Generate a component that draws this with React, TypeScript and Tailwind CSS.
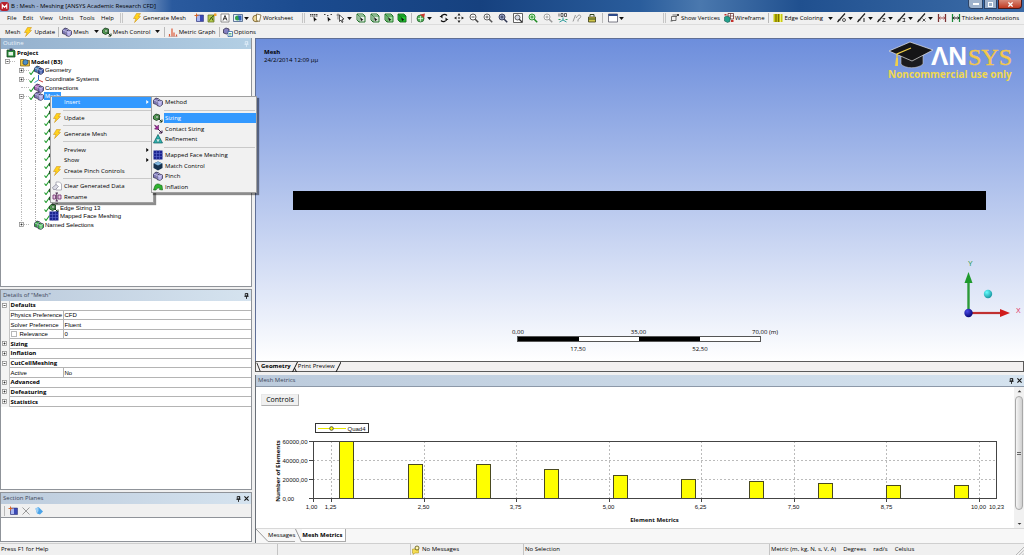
import React from "react";

type Kids = { children?: React.ReactNode };

const Ico = ({ children, cls = "size-[10px]" }: Kids & { cls?: string }) => (
  <svg viewBox="0 0 20 20" className={`${cls} shrink-0`} aria-hidden="true">
    {children}
  </svg>
);

/* ---------- icons ---------- */
const Bolt = () => (
  <Ico>
    <path d="M9 1h8l-4 6h4L5 19l3-8H3z" fill="#ffd21c" stroke="#c98a10" strokeWidth="1" />
  </Ico>
);
const CubePair = ({ a, b }: { a: string; b: string }) => (
  <Ico>
    <path d="M1 6l5-4 6 2v8l-5 3-6-2z" fill={a} stroke="#23203f" strokeWidth="1.4" />
    <path d="M1 6l6 2 5-4M7 8v7" fill="none" stroke="#e8e6ff" strokeWidth="1.2" />
    <path d="M8 9l5-3 6 2v7l-5 4-6-2z" fill={b} stroke="#23203f" strokeWidth="1.4" />
    <path d="M8 9l6 2 5-3M14 11v8" fill="none" stroke="#e8e6ff" strokeWidth="1.2" />
  </Ico>
);
const MeshCube = () => <CubePair a="#7e78b8" b="#a8a2e0" />;
const GeoCube = () => <CubePair a="#3f7fb5" b="#3558a8" />;
const ConnCube = () => <CubePair a="#b06ab8" b="#8d7cc8" />;
const GreenCube = () => <CubePair a="#39a345" b="#52c45c" />;
const SizingIco = () => (
  <Ico>
    <path d="M1 6l5-4 7 2v8l-6 3-6-3z" fill="#4f9c50" stroke="#17361c" strokeWidth="1.6" />
    <circle cx="8" cy="8" r="2.6" fill="#d9f0d4" stroke="#17361c" />
    <path d="M11 11l7 7M13 18h5v-5" fill="none" stroke="#1b3a1d" strokeWidth="2" />
  </Ico>
);
const ContactIco = () => (
  <Ico>
    <path d="M3 2l5 3 3-3v9l-8-1 3-3z" fill="#a02a9a" stroke="#4f1050" />
    <path d="M10 10l8 8M12 18h6v-5" fill="none" stroke="#3a1440" strokeWidth="2" />
  </Ico>
);
const RefineIco = () => (
  <Ico>
    <path d="M10 1l9 17H1z" fill="#2eb5b0" stroke="#0c5c60" strokeWidth="1.4" />
    <path d="M5.500 10h9L10 18z" fill="#c8f4ee" stroke="#0c5c60" />
  </Ico>
);
const MappedIco = () => (
  <Ico>
    <path d="M1 1h18v18H1z" fill="#1c2590" />
    <path d="M7 1v18M13 1v18M1 7h18M1 13h18" stroke="#5e69cc" strokeWidth="1.200" />
  </Ico>
);
const MatchIco = () => (
  <Ico>
    <path d="M1 5l9-4 9 4v9l-9 5-9-5z" fill="#16324f" />
    <path d="M2 5l8 4 8-4-8-4z" fill="#7fb4dc" />
  </Ico>
);
const InflationIco = () => (
  <Ico>
    <path d="M1 16L4 7c3-4 8-4 11-1l3 1 1 9-6-1 1-2c-3-2-6-1-8 3z" fill="#2fb32f" stroke="#145c14" strokeWidth="1.2" />
  </Ico>
);
const ClearIco = () => (
  <Ico>
    <path d="M8 2h7l4 4v12H8z" fill="#fff" stroke="#8d8d9c" strokeWidth="1.3" />
    <path d="M1 13l7-6 5 4-6 6H3z" fill="#dcdce6" stroke="#77778a" strokeWidth="1.2" />
  </Ico>
);
const RenameIco = () => (
  <Ico>
    <path d="M2 6h5v8H2zM12 6h6v8h-6z" fill="#e8c6e4" stroke="#6d2a6a" strokeWidth="1.6" />
    <path d="M7 2h5M9.500 2v16M7 18h5" stroke="#3d1440" strokeWidth="1.8" fill="none" />
  </Ico>
);
const Tick = () => (
  <svg viewBox="0 0 12 12" className="size-[6px] shrink-0" aria-hidden="true">
    <path d="M1 7l3 4L11 1" fill="none" stroke="#1c9a2a" strokeWidth="2.200" />
  </svg>
);
const ProjectIco = () => (
  <Ico>
    <path d="M2 4h14l2 2v12H2z" fill="#2b8a3c" stroke="#11401b" strokeWidth="1.5" />
    <path d="M5 8h9v7H5z" fill="#e4f4e4" />
    <path d="M7 1h6v5H7z" fill="#37415c" />
  </Ico>
);
const ModelIco = () => (
  <Ico>
    <path d="M1 5h7l2 2h9v11H1z" fill="#f0c53a" stroke="#7c5a0a" strokeWidth="1.4" />
    <path d="M6 8l4-3 6 2v6l-5 3-5-2z" fill="#4e8fc4" stroke="#1e3c64" strokeWidth="1.4" />
  </Ico>
);
const CoordIco = () => (
  <Ico>
    <path d="M9 12V2" stroke="#2b62c9" strokeWidth="2" />
    <path d="M9 12l9 4" stroke="#c93b3b" strokeWidth="2" />
    <path d="M9 12l-8 5" stroke="#2f9ac9" strokeWidth="2" />
  </Ico>
);
const Down = () => (
  <svg viewBox="0 0 8 5" className="h-[3px] w-[5px] shrink-0" aria-hidden="true">
    <path d="M0 0h8L4 5z" fill="#111" />
  </svg>
);
const PlaneNewIco = () => (
  <Ico>
    <path d="M5 4h14v13H5z" fill="#3b49b4" stroke="#20266a" />
    <path d="M6 5h6v11H6z" fill="#a9b7f0" />
    <path d="M5 1v8M1 5h8" stroke="#d6672a" strokeWidth="2" />
  </Ico>
);
const NoteIco = () => (
  <Ico>
    <path d="M2 4h12v14H2z" fill="#b6cc4c" stroke="#5c6b1a" strokeWidth="1.4" />
    <path d="M5 15l4-7 3 7M10 8l8-6" stroke="#2c4a16" strokeWidth="1.800" fill="none" />
    <path d="M14 1h5v5h-5z" fill="#f2a22c" />
  </Ico>
);
const AIco = () => (
  <Ico>
    <path d="M2 2h16v16H2z" fill="#fff" stroke="#666" strokeWidth="1.4" />
    <path d="M6 15l4-10 4 10M7.500 11.500h5" stroke="#222" strokeWidth="1.800" fill="none" />
  </Ico>
);
const ImageIco = () => (
  <Ico>
    <path d="M1 3h18v14H1z" fill="#e6eef8" stroke="#3c5a84" strokeWidth="1.6" />
    <circle cx="9" cy="10" r="5" fill="#2f9e48" />
    <path d="M10 5h7v10h-5z" fill="#2a5bb8" />
  </Ico>
);
const SheetIco = () => (
  <Ico>
    <circle cx="8" cy="11" r="6.500" fill="#f2dc9c" stroke="#6b5320" strokeWidth="1.6" />
    <path d="M9 2l9 2-3 13-6-2z" fill="#fdfdf4" stroke="#6b5320" strokeWidth="1.4" />
  </Ico>
);
const GraphIco = () => (
  <Ico>
    <path d="M3 19v-5M8 19V3M12 19v-8M17 19v-4" stroke="#dd5836" strokeWidth="2.400" />
    <path d="M1 19h18" stroke="#a88" />
  </Ico>
);
const OptionsIco = () => (
  <Ico>
    <path d="M1 5l5-3 6 2v7l-5 3-6-2z" fill="#8580c0" stroke="#23203f" strokeWidth="1.4" />
    <path d="M10 9h9v10h-9z" fill="#fff" stroke="#2a62a0" strokeWidth="1.5" />
    <path d="M12 13h5M12 16h5" stroke="#2a9a5a" strokeWidth="1.5" />
  </Ico>
);
const PickIco = ({ v }: { v: boolean }) => (
  <Ico>
    <path d={v ? "M2 3h3M15 3h3M8 5h3" : "M2 3h16M2 6h16"} stroke="#444" strokeWidth="2" strokeDasharray="3 1" />
    <path d="M9 7l7 7-4 .5L10 18z" fill="#111" />
  </Ico>
);
const CursorIco = () => (
  <Ico>
    <path d="M4 1v12M1 4h6" stroke="#555" strokeWidth="1.4" />
    <path d="M7 4l9 8-4 1 2 5-2 1-2-5-3 3z" fill="#fff" stroke="#111" strokeWidth="1.4" />
  </Ico>
);
const SelCube = ({ fill }: { fill: string }) => (
  <Ico>
    <path d="M2 2h12l4 4v12H6l-4-4z" fill={fill} stroke="#156a1e" strokeWidth="1.8" />
    <path d="M2 2l4 4h12M6 6v12" fill="none" stroke="#156a1e" strokeWidth="1.6" />
    <path d="M8 8l7 6-3 .5L10 17z" fill="#111" />
  </Ico>
);
const ViewIco = () => (
  <Ico>
    <circle cx="9" cy="11" r="7" fill="#54b45c" stroke="#1d5a26" strokeWidth="1.5" />
    <path d="M8 3l10-2-2 9z" fill="#c63a2e" />
    <path d="M4 11h10M9 6v11" stroke="#e6f7e6" strokeWidth="1.5" />
  </Ico>
);
const RotateIco = () => (
  <Ico>
    <path d="M16 5C12 1 5 3 4 8M4 15c4 4 11 2 12-3" fill="none" stroke="#111" strokeWidth="2.400" />
    <path d="M1 6h6v5zM19 14h-6V9z" fill="#111" />
  </Ico>
);
const PanIco = () => (
  <Ico>
    <path d="M10 0l3 5H7zM10 20l3-5H7zM0 10l5-3v6zM20 10l-5-3v6z" fill="#222" />
    <path d="M8.500 8.500h3v3h-3z" fill="#222" />
  </Ico>
);
const LensIco = ({ c, fill = "#fff", minus = false }: { c: string; fill?: string; minus?: boolean }) => (
  <Ico>
    <circle cx="8" cy="8" r="6" fill={fill} stroke={c} strokeWidth="1.8" />
    <path d="M12.500 12.500l6 6" stroke={c} strokeWidth="3" />
    <path d={minus ? "M5 8h6" : "M5 8h6M8 5v6"} stroke={c} strokeWidth="1.800" />
  </Ico>
);
const BoxLensIco = () => (
  <Ico>
    <path d="M1 1h18v18H1z" fill="#fff" stroke="#333" strokeWidth="1.500" />
    <circle cx="9" cy="9" r="5" fill="#d5dae6" stroke="#333" strokeWidth="1.500" />
    <path d="M12.500 12.500L18 18" stroke="#333" strokeWidth="2.400" />
  </Ico>
);
const IsoIco = () => (
  <Ico>
    <path d="M2 1v6M6 1v6h4V1H6M13 1v6h4V1z" fill="none" stroke="#333" strokeWidth="1.500" />
    <path d="M10 9v5M10 14l-7 4M10 14l7 4" stroke="#2a9a9a" strokeWidth="2" />
    <path d="M1 13l4 0M15 13h4" stroke="#2a9a5a" strokeWidth="2" />
  </Ico>
);
const LookIco = () => (
  <Ico>
    <path d="M2 17L7 4M8 10l4-5M12 5c5-3 7 2 4 5l-4 3v4" fill="none" stroke="#999" strokeWidth="2" />
  </Ico>
);
const ManageIco = () => (
  <Ico>
    <path d="M3 8h14v10H3z" fill="#d0c64a" stroke="#3a3a14" strokeWidth="1.600" />
    <path d="M6 7V3h8v4M3 12h14" fill="none" stroke="#2e4420" strokeWidth="2" />
  </Ico>
);
const WindowIco = () => (
  <Ico>
    <path d="M1 2h18v16H1z" fill="#fff" stroke="#445" strokeWidth="1.400" />
    <path d="M1 2h18v4H1z" fill="#2d4a8a" />
  </Ico>
);
const VertexIco = () => (
  <Ico>
    <path d="M3 7h9v8H3zM12 8l4-4M5 4h13M1 16h4" fill="none" stroke="#444" strokeWidth="1.500" />
    <path d="M14 2h4v4h-4z" fill="#444" />
  </Ico>
);
const WireIco = () => (
  <Ico>
    <path d="M8 1h11v11H8z" fill="#fff" stroke="#5c2020" strokeWidth="1.500" />
    <path d="M8 6h11M13 1v11" stroke="#5c2020" strokeWidth="1.200" />
    <path d="M1 8l5-2 6 3v8l-5 2-6-3z" fill="#23a08c" stroke="#0c4a40" />
    <path d="M14 14h5v4h-5zM1 2h4v3H1z" fill="#c4302c" />
  </Ico>
);
const EdgeColIco = () => (
  <Ico>
    <path d="M1 2h18v16H1z" fill="#c9c914" />
    <path d="M6 2v16M11 2v16" stroke="#7a6f00" strokeWidth="2.500" />
    <path d="M15 2v16" stroke="#f2f26a" strokeWidth="2" />
  </Ico>
);
const EdgeIco = ({ n }: { n: number }) => (
  <Ico>
    <path d="M1 18L16 1M2 14h5" stroke="#222" strokeWidth="2.400" fill="none" />
    {n === 0 && <circle cx="14" cy="14" r="3" fill="none" stroke="#222" strokeWidth="1.500" />}
    {n === 1 && <path d="M14 10v8" stroke="#222" strokeWidth="2" />}
    {n === 2 && <path d="M11 11h5l-5 6h6" stroke="#222" strokeWidth="1.500" fill="none" />}
    {n === 3 && <path d="M11 11h5l-2 3 2 3h-5" stroke="#222" strokeWidth="1.500" fill="none" />}
    {n === 4 && <path d="M11 11l6 6M17 11l-6 6" stroke="#222" strokeWidth="1.500" />}
  </Ico>
);
const AnnIco = ({ c, d }: { c: string; d: string }) => (
  <Ico>
    <path d="M3 2v16M17 2v16" stroke={c} strokeWidth="2.500" />
    <path d="M3 10h14" stroke={d} strokeWidth="2" />
    <path d="M7 7l-3 3 3 3M13 7l3 3-3 3" stroke={d} strokeWidth="1.500" fill="none" />
  </Ico>
);
const PinIco = () => (
  <svg viewBox="0 0 12 14" className="h-[6px] w-[5px]" aria-hidden="true">
    <path d="M3 1h6v6H3zM1 8h10M6 8v6M8 1v6" fill="none" stroke="currentColor" strokeWidth="2" />
  </svg>
);
const CloseIco = () => (
  <svg viewBox="0 0 12 12" className="size-[5px]" aria-hidden="true">
    <path d="M1 1l10 10M11 1L1 11" stroke="#111" strokeWidth="2.600" />
  </svg>
);

/* ---------- toolbar parts ---------- */
const Grip = () => <span className="h-[10px] w-[3px] shrink-0 border-x border-[#c6c6c6]" />;
const Sep = () => <span className="h-[10px] w-px shrink-0 bg-[#b9b9b9]" />;
const Tool = ({ name, children, drop }: Kids & { name: string; drop?: boolean }) => (
  <button type="button" aria-label={name} className="flex shrink-0 items-center gap-px">
    {children}
    {drop && <Down />}
  </button>
);
const TextTool = ({ icon, label, drop }: { icon?: React.ReactNode; label: string; drop?: boolean }) => (
  <button type="button" className="flex shrink-0 items-center gap-px whitespace-nowrap">
    {icon}
    <span>{label}</span>
    {drop && (
      <span className="pl-1">
        <Down />
      </span>
    )}
  </button>
);

const TitleBar = () => (
  <header className="flex h-3 shrink-0 items-center justify-between bg-[linear-gradient(90deg,#8fa8cc_0,#9db1d0_80px,#7f9bc4_140px,#2a5a9e_172px,#1b4b8f_300px,#16417f_480px,#2a5d9c_640px,#4a78ae_700px,#20508f_800px,#3a6aa6_1000px)]">
    <div className="flex items-center gap-[2px]">
      <svg viewBox="0 0 20 20" className="size-[9px]" aria-hidden="true">
        <rect width="20" height="20" rx="6" fill="#b8202c" />
        <path d="M5 15V6l5 6 5-6v9" fill="none" stroke="#fff" strokeWidth="2.500" />
      </svg>
      <h1 className="whitespace-nowrap text-[6px] leading-3 text-black">B : Mesh - Meshing [ANSYS Academic Research CFD]</h1>
    </div>
    <div className="flex h-[9px] gap-px self-start pr-[2px] text-white">
      <button type="button" aria-label="Minimize" className="flex w-[15px] items-center justify-center rounded-bl-sm border border-t-0 border-[#2c4468] bg-[#9fb3cd]">
        <span className="h-[2px] w-[6px] bg-white" />
      </button>
      <button type="button" aria-label="Restore" className="flex w-[13px] items-center justify-center border border-t-0 border-[#2c4468] bg-[#9fb3cd]">
        <span className="size-[5px] border border-white" />
      </button>
      <button type="button" aria-label="Close" className="flex w-[24px] items-center justify-center rounded-br-sm border border-t-0 border-[#4c1818] bg-[linear-gradient(#d88a78,#c03a22)]">
        <svg viewBox="0 0 12 12" className="size-[5px]" aria-hidden="true">
          <path d="M1 1l10 10M11 1L1 11" stroke="#fff" strokeWidth="3" />
        </svg>
      </button>
    </div>
  </header>
);

const MENUS = ["File", "Edit", "View", "Units", "Tools", "Help"];

const Toolbars = () => (
  <div className="shrink-0 bg-[#f0f0f0] text-[6px] leading-3 text-black">
    <div className="flex h-[13px] items-center border-b border-[#dcdcdc]">
      <nav className="flex w-[118px] shrink-0 justify-between pl-[7px] pr-1">
        {MENUS.map((m) => (
          <button type="button" key={m}>
            {m}
          </button>
        ))}
      </nav>
      <div className="flex w-[184px] shrink-0 items-center gap-[3px] pl-[2px]">
        <Grip />
        <span className="w-[3px]" />
        <TextTool icon={<Bolt />} label="Generate Mesh" />
        <span className="w-[2px]" />
        <Tool name="Section plane"><PlaneNewIco /></Tool>
        <Tool name="Annotation"><NoteIco /></Tool>
        <Tool name="Text"><AIco /></Tool>
        <Tool name="Figure" drop><ImageIco /></Tool>
        <TextTool icon={<SheetIco />} label="Worksheet" />
      </div>
      <div className="flex w-[134px] shrink-0 items-center justify-between pr-1">
        <Grip />
        <Tool name="Select type"><PickIco v={false} /></Tool>
        <Tool name="Select mode"><PickIco v /></Tool>
        <Tool name="Cursor" drop><CursorIco /></Tool>
        <Tool name="Vertex"><SelCube fill="#e9f3e9" /></Tool>
        <Tool name="Edge"><SelCube fill="#dcecdc" /></Tool>
        <Tool name="Face"><SelCube fill="#9fe09f" /></Tool>
        <Tool name="Body"><SelCube fill="#1fc42c" /></Tool>
        <Sep />
        <Tool name="Extend" drop><ViewIco /></Tool>
      </div>
      <div className="flex w-[188px] shrink-0 items-center justify-between pl-[3px]">
        <Tool name="Rotate"><RotateIco /></Tool>
        <Tool name="Pan"><PanIco /></Tool>
        <Tool name="Zoom"><LensIco c="#444" minus /></Tool>
        <Tool name="Zoom in"><LensIco c="#555" /></Tool>
        <Tool name="Box zoom"><LensIco c="#2c3350" fill="#98a4c6" /></Tool>
        <Tool name="Fit"><BoxLensIco /></Tool>
        <Tool name="Magnifier"><LensIco c="#1c8a22" fill="#c9f0c4" /></Tool>
        <Tool name="Previous view"><LensIco c="#999" /></Tool>
        <Tool name="Isometric view"><IsoIco /></Tool>
        <Tool name="Look at"><LookIco /></Tool>
        <Tool name="Manage views"><ManageIco /></Tool>
        <Sep />
        <Tool name="Viewports" drop><WindowIco /></Tool>
      </div>
      <div className="ml-auto flex w-[361px] shrink-0 items-center justify-between pr-[5px]">
        <Grip />
        <TextTool icon={<VertexIco />} label="Show Vertices" />
        <TextTool icon={<WireIco />} label="Wireframe" />
        <Sep />
        <TextTool icon={<EdgeColIco />} label="Edge Coloring" drop />
        {[0, 1, 2, 3, 4].map((n) => (
          <Tool key={n} name={`Edge style ${n}`} drop>
            <EdgeIco n={n} />
          </Tool>
        ))}
        <Tool name="Edge direction"><AnnIco c="#7a3030" d="#a05050" /></Tool>
        <TextTool icon={<AnnIco c="#1c8a3a" d="#222" />} label="Thicken Annotations" />
      </div>
    </div>
    <div className="flex h-[13px] items-center">
      <div className="flex w-[256px] items-center justify-between pl-[5px]">
        <span>Mesh</span>
        <TextTool icon={<Bolt />} label="Update" />
        <Sep />
        <TextTool icon={<MeshCube />} label="Mesh" drop />
        <TextTool icon={<SizingIco />} label="Mesh Control" drop />
        <Sep />
        <TextTool icon={<GraphIco />} label="Metric Graph" />
        <Sep />
        <TextTool icon={<OptionsIco />} label="Options" />
      </div>
    </div>
  </div>
);

/* ---------- left column ---------- */
const PanelHead = ({ title, active, pin, close }: { title: string; active?: boolean; pin?: boolean; close?: boolean }) => (
  <div
    className={`flex h-[11px] shrink-0 items-center justify-between px-[2px] text-[6px] leading-[11px] ${
      active ? "bg-[linear-gradient(90deg,#94b0cd,#b3cfe4)] text-[#e9f2fa]" : "bg-[linear-gradient(90deg,#bccbdc,#d5e3ef)] text-[#3c4658]"
    }`}
  >
    <h2>{title}</h2>
    <div className={`flex items-center gap-[3px] ${active ? "text-[#dcebf6]" : "text-[#111]"}`}>
      {pin && <button type="button" aria-label={`Pin ${title}`}><PinIco /></button>}
      {close && <button type="button" aria-label={`Close ${title}`}><CloseIco /></button>}
    </div>
  </div>
);

const Expander = ({ open }: { open: boolean }) => (
  <svg viewBox="0 0 10 10" className="size-[5px] shrink-0" aria-hidden="true">
    <rect x="1" y="1" width="8" height="8" fill="#fff" stroke="#8a8a8a" strokeWidth="1.500" />
    <path d={open ? "M3 5h4" : "M3 5h4M5 3v4"} stroke="#222" strokeWidth="1.500" />
  </svg>
);

type Node = { label?: string; level: number; icon: React.ReactNode; open?: boolean; bold?: boolean; tick?: boolean; sel?: boolean };
const NODES: Node[] = [
  { label: "Project", level: 0, icon: <ProjectIco />, bold: true },
  { label: "Model (B3)", level: 1, icon: <ModelIco />, bold: true, open: true },
  { label: "Geometry", level: 2, icon: <GeoCube />, open: false, tick: true },
  { label: "Coordinate Systems", level: 2, icon: <CoordIco />, open: false, tick: true },
  { label: "Connections", level: 2, icon: <ConnCube />, tick: true },
  { label: "Mesh", level: 2, icon: <MeshCube />, open: true, tick: true, sel: true },
  ...Array.from({ length: 12 }, () => ({ level: 3, icon: <SizingIco />, tick: true })),
  { label: "Edge Sizing 13", level: 3, icon: <SizingIco />, tick: true },
  { label: "Mapped Face Meshing", level: 3, icon: <MappedIco />, tick: true },
  { label: "Named Selections", level: 2, icon: <GreenCube />, open: false },
];

const PAD = ["pl-[5px]", "pl-[4px]", "pl-[18px]", "pl-[20px]"];

const Tree = () => (
  <ul className="flex h-[180px] shrink-0 flex-col font-['Liberation_Sans',sans-serif] text-[6px] leading-[8px] text-black">
    {NODES.map((n, i) => (
      <li key={i} className={`flex min-h-0 flex-1 items-center ${PAD[n.level]}`}>
        {n.level > 0 && n.level < 3 && (
          <span className="flex w-[10px] shrink-0 items-center">
            {n.open === undefined ? <span className="ml-[2px] w-2 border-t border-dotted border-[#bbb]" /> : <Expander open={n.open} />}
            {n.open !== undefined && <span className="flex-1 border-t border-dotted border-[#bbb]" />}
          </span>
        )}
        {n.level === 3 && (
          <>
            <span className="h-full w-[14px] shrink-0 border-l border-dotted border-[#bbb]" />
            <span className="h-full w-[9px] shrink-0 border-l border-dotted border-[#aaa]" />
          </>
        )}
        {(n.level === 1 || (n.level === 2 && !n.tick)) && <span className="w-[5px]" />}
        {n.tick && (
          <span className="flex w-[5px] shrink-0 self-end">
            <Tick />
          </span>
        )}
        {n.icon}
        {n.label && (
          <span className={`whitespace-nowrap px-px ${n.bold ? "font-['Open_Sans',sans-serif] font-bold" : ""} ${n.sel ? "bg-[#3399ff] text-white" : ""}`}>{n.label}</span>
        )}
      </li>
    ))}
  </ul>
);

type Entry = { label: string; icon?: React.ReactNode; sub?: boolean; on?: boolean } | null;
const CONTEXT: Entry[] = [
  { label: "Insert", sub: true, on: true },
  null,
  { label: "Update", icon: <Bolt /> },
  null,
  { label: "Generate Mesh", icon: <Bolt /> },
  null,
  { label: "Preview", sub: true },
  { label: "Show", sub: true },
  { label: "Create Pinch Controls", icon: <Bolt /> },
  null,
  { label: "Clear Generated Data", icon: <ClearIco /> },
  { label: "Rename", icon: <RenameIco /> },
];
const INSERT: Entry[] = [
  { label: "Method", icon: <MeshCube /> },
  null,
  { label: "Sizing", icon: <SizingIco />, on: true },
  { label: "Contact Sizing", icon: <ContactIco /> },
  { label: "Refinement", icon: <RefineIco /> },
  null,
  { label: "Mapped Face Meshing", icon: <MappedIco /> },
  { label: "Match Control", icon: <MatchIco /> },
  { label: "Pinch", icon: <MeshCube /> },
  { label: "Inflation", icon: <InflationIco /> },
];

const Menu = ({ items, cls }: { items: Entry[]; cls: string }) => (
  <div role="menu" className={`absolute z-10 flex flex-col border border-[#a0a0a0] bg-[#f1f1f1] text-[6px] leading-[10px] text-black shadow-[2px_2px_1px_rgba(0,0,0,0.45)] ${cls}`}>
    {items.map((it, i) =>
      it === null ? (
        <div key={i} role="separator" className="flex flex-1 items-center pl-3 pr-px">
          <span className="w-full border-t border-[#c9c9c9]" />
        </div>
      ) : (
        <button type="button" role="menuitem" key={i} className="flex min-h-0 flex-2 items-center pl-px text-left">
          <span className={`flex h-full w-[11px] shrink-0 items-center ${it.on && it.sub ? "bg-[#3399ff]" : ""}`}>{it.icon}</span>
          <span className={`flex h-full flex-1 items-center justify-between pl-px pr-1 whitespace-nowrap ${it.on ? "bg-[#3399ff] text-white" : ""}`}>
            {it.label}
            {it.sub && (
              <svg viewBox="0 0 5 8" className="h-[4px] w-[3px]" aria-hidden="true">
                <path d="M0 0l5 4-5 4z" fill="currentColor" />
              </svg>
            )}
          </span>
        </button>
      ),
    )}
  </div>
);

type Detail = { head?: string; open?: boolean; name?: string; value?: string; check?: boolean };
const DETAILS: Detail[] = [
  { head: "Defaults", open: true },
  { name: "Physics Preference", value: "CFD" },
  { name: "Solver Preference", value: "Fluent" },
  { name: "Relevance", value: "0", check: true },
  { head: "Sizing", open: false },
  { head: "Inflation", open: false },
  { head: "CutCellMeshing", open: true },
  { name: "Active", value: "No" },
  { head: "Advanced", open: false },
  { head: "Defeaturing", open: false },
  { head: "Statistics", open: false },
];

const DetailsTable = () => (
  <table className="h-[106px] w-full table-fixed border-collapse text-[6px] leading-[8px] text-black">
    <colgroup>
      <col className="w-2" />
      <col className="w-[54px]" />
      <col />
    </colgroup>
    <tbody>
      {DETAILS.map((d, i) => (
        <tr key={i}>
          <td className="border-r border-[#c4c4c4] bg-[#f4f4f4] p-0 pl-px">{d.head && <Expander open={!!d.open} />}</td>
          {d.head ? (
            <th colSpan={2} className="border-b border-[#b4b4b4] p-0 pl-px text-left font-bold">
              {d.head}
            </th>
          ) : (
            <>
              <td className="whitespace-nowrap border-b border-r border-[#b4b4b4] p-0 pl-px font-['Liberation_Sans',sans-serif]">
                {d.check ? (
                  <label className="flex items-center gap-[3px]">
                    <input type="checkbox" className="size-[6px] appearance-none border border-[#b8b8b8] bg-white" />
                    {d.name}
                  </label>
                ) : (
                  d.name
                )}
              </td>
              <td className="border-b border-[#b4b4b4] p-0 pl-px font-['Liberation_Sans',sans-serif]">{d.value}</td>
            </>
          )}
        </tr>
      ))}
    </tbody>
  </table>
);

const LeftColumn = () => (
  <aside className="flex w-[252px] shrink-0 flex-col gap-[2px] pb-px">
    <section className="relative flex min-h-0 flex-1 flex-col border border-t-0 border-[#8f9399] bg-white">
      <PanelHead title="Outline" active pin />
      <Tree />
      <Menu items={CONTEXT} cls="left-[49px] top-[58px] h-[107px] w-[104px]" />
      <Menu items={INSERT} cls="left-[150px] top-[58px] h-[97px] w-[106px]" />
    </section>
    <section className="flex h-[201px] shrink-0 flex-col border border-[#8f9399] bg-white">
      <PanelHead title={'Details of "Mesh"'} pin />
      <DetailsTable />
    </section>
    <section className="flex h-[50px] shrink-0 flex-col border border-[#8f9399] bg-[#f0f0f0]">
      <PanelHead title="Section Planes" pin close />
      <div className="flex h-[13px] items-center gap-[3px] pl-[3px]">
        <Sep />
        <Tool name="New section plane"><PlaneNewIco /></Tool>
        <Tool name="Delete section plane">
          <Ico><path d="M3 3l14 14M17 3L3 17" stroke="#9a9a9a" strokeWidth="2" /></Ico>
        </Tool>
        <Tool name="Show whole elements">
          <Ico><path d="M3 5l6-3 9 9-6 6-6-2z" fill="#4aa3e8" /><path d="M3 5l6-3v8l-3 5z" fill="#9fd0f6" /></Ico>
        </Tool>
      </div>
      <div className="flex-1 border-t border-[#8f9399] bg-white" />
    </section>
  </aside>
);

/* ---------- graphics window ---------- */
const Logo = () => (
  <svg viewBox="0 0 126 44" className="absolute right-[10px] top-[1px] h-[44px] w-[126px]" role="img" aria-label="ANSYS Noncommercial use only">
    <path d="M13 15v9c4 5 17 5 22 0v-9z" fill="#1b1b1e" stroke="#c9c9c9" strokeWidth="0.600" />
    <path d="M1 11L22 2l23 8-21 11z" fill="#151517" stroke="#e8e8e8" strokeWidth="0.700" />
    <path d="M23 8L9 14v10" fill="none" stroke="#f0cf4a" strokeWidth="1.300" />
    <path d="M8 18l-1 8h3l0-8z" fill="#f0cf4a" />
    <text x="43" y="25" fontFamily="Liberation Sans, sans-serif" fontWeight="700" fontSize="26" fill="#fff">ΛN</text>
    <text x="80" y="25" fontFamily="Liberation Serif, serif" fontSize="24" fill="#f3c74a" stroke="#f3c74a" strokeWidth="0.400">SYS</text>
    <text x="0" y="38" fontFamily="Open Sans, sans-serif" fontWeight="700" fontSize="10" fill="#f0d850">Noncommercial use only</text>
  </svg>
);

const Triad = () => (
  <svg viewBox="0 0 62 62" className="absolute bottom-[38px] right-[1px] size-[62px]" role="img" aria-label="Axis triad">
    <defs>
      <radialGradient id="cy" cx="0.35" cy="0.3" r="0.800"><stop offset="0" stopColor="#6ff" /><stop offset="1" stopColor="#108a96" /></radialGradient>
      <radialGradient id="bl" cx="0.35" cy="0.3" r="0.800"><stop offset="0" stopColor="#4a4ae8" /><stop offset="1" stopColor="#00006a" /></radialGradient>
    </defs>
    <path d="M7.500 52V19" stroke="#2c9a38" strokeWidth="2.400" />
    <path d="M7.500 11l4 11h-8z" fill="#1e9a2c" />
    <path d="M8 52h32" stroke="#c03030" strokeWidth="2.200" />
    <path d="M49 52l-10 4v-8z" fill="#d01c1c" />
    <circle cx="7.500" cy="52" r="4.200" fill="url(#bl)" />
    <circle cx="27" cy="33" r="4.200" fill="url(#cy)" />
    <text x="7" y="5" fontFamily="Liberation Sans, sans-serif" fontSize="7" fill="#2c9a48">Y</text>
    <text x="55" y="52" fontFamily="Liberation Sans, sans-serif" fontSize="7" fill="#e03060">X</text>
  </svg>
);

const ScaleBar = () => (
  <div className="absolute bottom-[8px] left-[256px] w-[266px] text-[6px] leading-[8px] text-black">
    <div className="flex h-2">
      <span className="w-[60px]">0,00</span>
      <span className="w-[133px] text-center">35,00</span>
      <span className="w-[73px] whitespace-nowrap text-right">70,00 (m)</span>
    </div>
    <div className="ml-[5px] flex h-[6px] w-[244px] border border-[#555] bg-white">
      <span className="flex-1 bg-black" />
      <span className="flex-1" />
      <span className="flex-1 bg-black" />
      <span className="flex-1" />
    </div>
    <div className="ml-[5px] mt-[3px] flex w-[244px]">
      <span className="w-[122px] text-center">17,50</span>
      <span className="w-[122px] text-center">52,50</span>
    </div>
  </div>
);

const Viewport = () => (
  <section className="relative min-h-0 flex-1 border-l border-t border-[#5f6f96] bg-[linear-gradient(#6d8edc,#ffffff)]">
    <div className="absolute left-2 top-[9px] text-[6px] leading-[8px] text-black">
      <p className="font-bold">Mesh</p>
      <p>24/2/2014 12:09 μμ</p>
    </div>
    <Logo />
    <div className="absolute left-[37px] right-[38px] top-[152px] h-[19px] bg-black" />
    <ScaleBar />
    <Triad />
  </section>
);

/* ---------- metrics chart ---------- */
const BARS: [number, number][] = [
  [84, 55], [153, 78], [221, 78], [289, 83], [358, 89], [426, 93], [494, 95], [563, 97], [631, 99], [699, 99],
];
const XT: [number, string][] = [
  [56, "1,00"], [75, "1,25"], [168, "2,50"], [260, "3,75"], [353, "5,00"], [445, "6,25"], [538, "7,50"], [631, "8,75"], [723, "10,00"], [741, "10,23"],
];
const YT: [number, string][] = [
  [55, "60000,00"], [74, "40000,00"], [93, "20000,00"], [112, "0,00"],
];

const Chart = () => (
  <svg viewBox="1 1 757 141" className="h-full min-w-0 flex-1" fontFamily="Liberation Sans, sans-serif" fontSize="6" fill="#111" shapeRendering="crispEdges" role="img" aria-label="Number of Elements by Element Metrics">
    <rect x="59.500" y="37.500" width="53" height="9" fill="#fff" stroke="#333" />
    <path d="M62 42.500h28" stroke="#e6e600" />
    <circle cx="76" cy="42.500" r="1.800" fill="#ffff00" stroke="#554" shapeRendering="auto" />
    <text x="92" y="45">Quad4</text>
    <path d="M57 74.500h683M57 93.500h683M75.500 55v57M168.500 55v57M260.500 55v57M353.500 55v57M445.500 55v57M538.500 55v57M630.500 55v57M723.500 55v57" stroke="#bbb" strokeDasharray="2 2" />
    {BARS.map(([x, y]) => (
      <rect key={x} x={x - 0.5} y={y + 0.5} width="14" height={112 - y} fill="#ffff00" stroke="#4a4a20" />
    ))}
    <path d="M53 112.500h687M57.500 55v61M53 55.500h4M53 74.500h4M53 93.500h4M75.500 112v4M168.500 112v4M260.500 112v4M353.500 112v4M445.500 112v4M538.500 112v4M630.500 112v4M723.500 112v4M57 55.500h683.500v57" fill="none" stroke="#444" />
    {YT.map(([y, t]) => (
      <text key={t} x={t === "0,00" ? 27 : 52} y={y + 3} textAnchor={t === "0,00" ? "start" : "end"}>{t}</text>
    ))}
    {XT.map(([x, t]) => (
      <text key={t} x={x} y="123" textAnchor="middle">{t}</text>
    ))}
    <text x="399" y="136" textAnchor="middle" fontFamily="Open Sans, sans-serif" fontWeight="700">Element Metrics</text>
    <text transform="translate(24 85) rotate(-90)" textAnchor="middle" fontFamily="Open Sans, sans-serif" fontWeight="700">Number of Elements</text>
  </svg>
);

const Metrics = () => (
  <section className="flex h-[168px] shrink-0 flex-col border-l border-[#6a7078]">
    <PanelHead title="Mesh Metrics" pin close />
    <div className="relative flex h-[142px] shrink-0 border-t border-[#8c98a8] bg-white">
      <button type="button" className="absolute left-[5px] top-[7px] h-3 w-[38px] border border-[#b0b0b0] border-t-[#e8e8e8] border-l-[#e8e8e8] bg-[#f0f0f0] text-[7px] leading-[10px] text-black">
        Controls
      </button>
      <Chart />
      <div className="flex w-[10px] shrink-0 flex-col items-center bg-[#f1f1f1]">
        <svg viewBox="0 0 8 8" className="my-[2px] size-[5px]" aria-hidden="true"><path d="M1 5l3-3 3 3z" fill="#333" /></svg>
        <div className="flex h-[114px] w-2 flex-col items-center justify-center gap-px rounded-sm border border-[#a8a8a8] bg-[linear-gradient(90deg,#f5f5f5,#cfcfcf)]">
          <span className="h-px w-1 bg-[#666]" />
          <span className="h-px w-1 bg-[#666]" />
        </div>
        <svg viewBox="0 0 8 8" className="mb-[2px] mt-auto size-[5px]" aria-hidden="true"><path d="M1 3l3 3 3-3z" fill="#333" /></svg>
      </div>
    </div>
    <div className="flex h-[15px] items-start border-t border-[#d8d8d8] bg-[#f7f7f7] text-[6px] leading-3 text-black">
      <svg viewBox="0 0 12 13" className="h-[13px] w-3" aria-hidden="true"><path d="M0 0l12 12.500" stroke="#999" /></svg>
      <button type="button" className="border-b border-[#aaa]">Messages</button>
      <svg viewBox="0 0 6 13" className="h-[13px] w-[7px]" aria-hidden="true"><path d="M0 0l6 13" stroke="#999" /></svg>
      <button type="button" className="border-b border-r border-[#aaa] bg-white pr-[3px] font-bold text-black">Mesh Metrics</button>
    </div>
  </section>
);

const ViewTabs = () => (
  <div className="flex h-[11px] shrink-0 items-center border border-[#5a5a5a] bg-[#f2f0f0] text-[6px] leading-[9px] text-black">
    <svg viewBox="0 0 6 10" className="h-[10px] w-[5px]" aria-hidden="true"><path d="M1 0l4 10" stroke="#111" /></svg>
    <button type="button" className="font-bold text-black">Geometry</button>
    <svg viewBox="0 0 6 10" className="h-[10px] w-[7px]" aria-hidden="true"><path d="M6 0L1 10M3 6l2 4" stroke="#111" fill="none" /></svg>
    <button type="button">Print Preview</button>
    <svg viewBox="0 0 6 10" className="h-[10px] w-[6px]" aria-hidden="true"><path d="M6 0L1 10" stroke="#111" /></svg>
  </div>
);

const StatusBar = () => (
  <footer className="flex h-3 shrink-0 items-center border-t border-[#cfcfcf] bg-[#f0f0f0] text-[6px] leading-[11px] text-black">
    <span className="w-[277px] shrink-0 pl-px">Press F1 for Help</span>
    <span className="h-full w-[133px] shrink-0 border-l border-[#c4c4c4]" />
    <span className="flex h-full w-[113px] shrink-0 items-center gap-px border-l border-[#c4c4c4]">
      <Ico>
        <path d="M3 8h12v8H8l-4 3v-3H3z" fill="#f4dc50" stroke="#a88a14" />
        <circle cx="12" cy="6" r="4" fill="#fff6b0" stroke="#5c5210" strokeWidth="1.600" />
      </Ico>
      No Messages
    </span>
    <span className="h-full min-w-0 flex-1 border-l border-[#c4c4c4] pl-px">No Selection</span>
    <span className="flex h-full w-[255px] shrink-0 gap-[7px] border-l border-[#c4c4c4] pl-px">
      <span>Metric (m, kg, N, s, V, A)</span>
      <span>Degrees</span>
      <span>rad/s</span>
      <span>Celsius</span>
      <svg viewBox="0 0 10 10" className="ml-auto size-2 self-end" aria-hidden="true"><path d="M0 10L10 0M4 10l6-6M8 10l2-2" stroke="#aaa" /></svg>
    </span>
  </footer>
);

export default function App() {
  return (
    <div className="flex h-screen flex-col overflow-hidden bg-[#f0f0f0] font-['Open_Sans','Noto_Sans',sans-serif]">
      <TitleBar />
      <Toolbars />
      <div className="flex min-h-0 flex-1 gap-[3px]">
        <LeftColumn />
        <main className="flex min-w-0 flex-1 flex-col">
          <Viewport />
          <ViewTabs />
          <div className="h-[3px] shrink-0" />
          <Metrics />
        </main>
      </div>
      <StatusBar />
    </div>
  );
}
